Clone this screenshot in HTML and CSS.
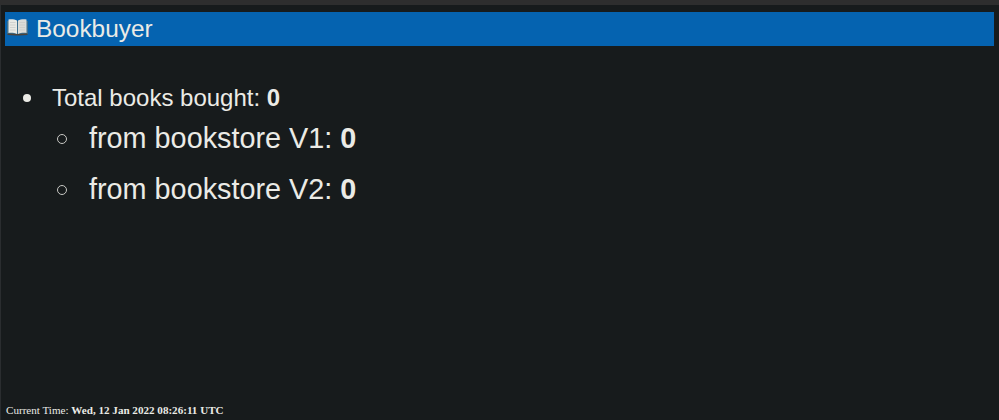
FILE: index.html
```html
<!DOCTYPE html>
<html lang="en">
<head>
    <meta charset="UTF-8">
    <title>Bookbuyer</title>
    <link rel="stylesheet" href="styles.css">
</head>
<body>
    <div class="top-strip"></div>

    <div class="page">
        <div class="header">
            <svg class="book-icon" viewBox="0 0 21 17" width="21" height="17" aria-hidden="true">
                <path d="M0 2 L0 15 L9.5 15.5 L11.5 15.5 L21 15 L21 2 Z" fill="#3f6f8c"/>
                <path d="M1.5 .5 C4.5 0 8 .4 10 1.6 L10 15 C8 14 4.5 13.6 1.5 14 Z" fill="#e9e9e4"/>
                <path d="M19.5 .5 C16.5 0 13 .4 11 1.6 L11 15 C13 14 16.5 13.6 19.5 14 Z" fill="#dcdcd8"/>
                <path d="M3 3.5 H8.5 M3 6 H8.5 M3 8.5 H8.5 M3 11 H8.5 M12.5 3.5 H18 M12.5 6 H18 M12.5 8.5 H18 M12.5 11 H18" stroke="#c9c9c6" stroke-width=".7"/>
                <path d="M.5 14.6 L9.5 15 L11.5 15 L20.5 14.6 L20.5 16 L12 16.6 L9 16.6 L.5 16 Z" fill="#4d4238"/>
            </svg>
            <span>Bookbuyer</span>
        </div>

        <ul class="totals">
            <li>Total books bought: <b>0</b>
                <ul class="sources">
                    <li>from bookstore V1: <b>0</b></li>
                    <li>from bookstore V2: <b>0</b></li>
                </ul>
            </li>
        </ul>

        <div class="footer">Current Time: <b>Wed, 12 Jan 2022 08:26:11 UTC</b></div>
    </div>
</body>
</html>
```

FILE: styles.css
```css
html, body {
    margin: 0;
    padding: 0;
    height: 100%;
}

body {
    display: flex;
    flex-direction: column;
    background-color: #171b1c;
    color: #ebebe6;
    font-family: "Liberation Sans", Arial, sans-serif;
    overflow: hidden;
}

.top-strip {
    height: 5px;
    background-color: #2e2e2e;
    flex-shrink: 0;
}

.page {
    flex: 1;
    display: flex;
    flex-direction: column;
    padding: 7px 5px 3px 5px;
    border-left: 1px solid #2a2d2f;
    min-height: 0;
}

.header {
    display: flex;
    align-items: center;
    gap: 8px;
    height: 34px;
    padding-left: 2px;
    margin-left: -1px;
    background-color: #0563b0;
    font-size: 24.4px;
}

.book-icon {
    flex-shrink: 0;
    margin-bottom: 3px;
}

.totals {
    margin: 38px 0 0 0;
    padding: 0 0 0 46px;
    font-size: 24px;
    line-height: 28px;
    list-style: none;
}

.totals > li::before {
    content: "";
    display: inline-block;
    width: 8px;
    height: 8px;
    margin-left: -29px;
    margin-right: 21px;
    vertical-align: 4px;
    border-radius: 50%;
    background-color: #ebebe6;
}

.sources {
    margin: 0;
    padding: 0 0 0 37px;
    font-size: 28.8px;
    list-style: none;
}

.sources li {
    line-height: 32px;
    padding: 10px 0 9px 0;
}

.sources li::before {
    content: "";
    display: inline-block;
    box-sizing: border-box;
    width: 10px;
    height: 10px;
    margin-left: -32px;
    margin-right: 22px;
    vertical-align: 4px;
    border: 1px solid #c8c8c4;
    border-radius: 50%;
}

.footer {
    margin-top: auto;
    font-family: "Liberation Serif", "Times New Roman", serif;
    font-size: 11.1px;
    line-height: 14px;
}
```
